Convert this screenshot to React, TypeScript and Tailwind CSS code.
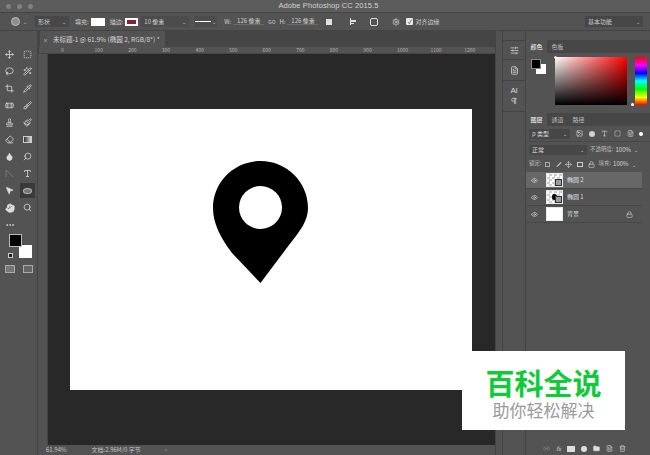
import React from "react";
import {
  Move, SquareDashed, Lasso, Wand2, Crop, Pipette, Bandage, Brush, Stamp, Paintbrush, Eraser, Droplet, Search, Type, MousePointer2, Hand, Settings, Eye, Lock, Trash2, Folder, Link2, Image, FileText, SlidersHorizontal, Pilcrow, Ellipsis,
} from "lucide-react";

const font = { fontFamily: '"Noto Sans CJK SC","Liberation Sans",sans-serif' };

function Tool({ children, active }: { children: React.ReactNode; active?: boolean }) {
  return <div className={`w-[15px] h-[15px] flex items-center justify-center text-[#dcdcdc] ${active ? "bg-[#3a3a3a]" : ""}`}>{children}</div>;
}

const rulerTop = ["0", "100", "200", "300", "400", "500", "600", "700", "800", "900", "1000", "1100", "1200"];

function LayerRow({ name, active, kind }: { name: string; active?: boolean; kind: "a" | "b" | "bg" }) {
  return (
    <div className={`h-[17px] flex items-center ${active ? "bg-[#676767]" : "bg-[#535353]"} border-b border-[#474747]`}>
      <Eye size={7} className="ml-[4px] w-[9px] text-[#d8d8d8]" />
      <div className={`relative ml-[7px] w-[17px] h-[14px] border border-[#e8e8e8] ${kind === "bg" ? "bg-white" : "bg-[repeating-conic-gradient(#cfcfcf_0_25%,#fff_0_50%)] bg-[length:5px_5px]"}`}>
        {kind === "b" && <div className="absolute left-[5px] top-[3px] w-[5px] h-[6px] rounded-full bg-black" />}
        {kind !== "bg" && <div className="absolute right-0 bottom-0 w-[7px] h-[7px] border border-[#333] bg-[#9a9a9a]" />}
      </div>
      <span className="ml-[4px] text-[6px] text-[#dedede] leading-none">{name}</span>
      {kind === "bg" && <Lock size={7} className="ml-auto mr-[9px] text-[#cfcfcf]" />}
    </div>
  );
}

export default function App() {
  return (
    <div className="relative w-[650px] h-[455px] overflow-hidden bg-[#535353] flex flex-col" style={font}>
      {/* title */}
      <div className="h-[13px] shrink-0 bg-[#5c5c5c] border-b border-[#444] flex items-center relative">
        <div className="flex gap-[6px] ml-[6px]">
          <div className="w-[5px] h-[5px] rounded-full bg-[#808080]" />
          <div className="w-[5px] h-[5px] rounded-full bg-[#808080]" />
          <div className="w-[5px] h-[5px] rounded-full bg-[#808080]" />
        </div>
        <div className="flex-1 text-center text-[7.5px] text-[#d4d4d4] leading-none tracking-[0.1px] mr-[26px]" style={{ fontFamily: '"Liberation Sans",sans-serif' }}>Adobe Photoshop CC 2015.5</div>
      </div>
      {/* options */}
      <div className="h-[18px] shrink-0 bg-[#535353] border-b border-[#444] flex items-center text-[6px] text-[#cfcfcf] leading-none">
        <div className="ml-[11px] w-[9px] h-[9px] rounded-full bg-[#8e8e8e] border border-[#bbb]" />
        <span className="ml-[3px] text-[5px]">⌄</span>
        <div className="ml-[8px] w-[34px] h-[11px] bg-[#484848] flex items-center justify-between px-[3px]"><span>形状</span><span className="text-[5px]">⌄</span></div>
        <span className="ml-[6px]">填充:</span>
        <div className="ml-[2px] w-[14px] h-[8px] bg-white" />
        <span className="ml-[5px]">描边:</span>
        <div className="ml-[2px] w-[13px] h-[8px] bg-white flex items-center justify-center"><div className="w-[9px] h-[4px] border-2 border-[#8a2030] bg-white" /></div>
        <div className="ml-[3px] w-[48px] h-[11px] flex items-center justify-between px-[3px] bg-[#4c4c4c]"><span>10 像素</span><span className="text-[5px]">⌄</span></div>
        <div className="ml-[5px] w-[23px] h-[11px] flex items-center gap-[1px] pl-[1px] bg-[#4c4c4c]"><div className="w-[16px] h-[1px] bg-white" /><span className="text-[5px]">⌄</span></div>
        <span className="ml-[7px]">W:</span>
        <span className="ml-[2px] w-[31px] text-center border-b border-[#6a6a6a]">126 像素</span>
        <span className="ml-[4px] text-[5px]">GO</span>
        <span className="ml-[4px]">H:</span>
        <span className="ml-[2px] w-[31px] text-center border-b border-[#6a6a6a]">126 像素</span>
        <div className="ml-[8px] w-[6px] h-[6px] bg-[#e0e0e0]" />
        <div className="ml-[18px] w-[7px] h-[7px] border-l border-[#e0e0e0] flex flex-col gap-[1px] justify-center"><div className="w-[5px] h-[2px] bg-[#e0e0e0]" /><div className="w-[3px] h-[1px] bg-[#e0e0e0]" /></div>
        <div className="ml-[13px] w-[8px] h-[8px] rounded-[2px] border border-[#e0e0e0]" />
        <Settings size={8} className="ml-[14px] text-[#e0e0e0]" />
        <div className="ml-[6px] w-[7px] h-[7px] bg-[#e8e8e8] rounded-[1px] flex items-center justify-center text-[#333] text-[6px]">✓</div>
        <span className="ml-[2px]">对齐边缘</span>
        <div className="ml-auto mr-[7px] w-[58px] h-[11px] bg-[#474747] flex items-center justify-between px-[3px]"><span>基本功能</span><span className="text-[5px]">⌄</span></div>
      </div>

      <div className="flex-1 flex min-h-0">
        {/* toolbar */}
        <div className="w-[38px] shrink-0 bg-[#535353] border-r border-[#444] pt-[16px] flex flex-col items-center">
          <div className="grid grid-cols-2 gap-x-[3px] gap-y-[2px] w-[33px]">
            <Tool><Move size={9} /></Tool>
            <Tool><SquareDashed size={9} /></Tool>
            <Tool><Lasso size={9} /></Tool>
            <Tool><Wand2 size={9} /></Tool>
            <Tool><Crop size={9} /></Tool>
            <Tool><Pipette size={9} /></Tool>
            <Tool><Bandage size={9} /></Tool>
            <Tool><Brush size={9} /></Tool>
            <Tool><Stamp size={9} /></Tool>
            <Tool><Paintbrush size={9} /></Tool>
            <Tool><Eraser size={9} /></Tool>
            <Tool><div className="w-[9px] h-[7px] bg-gradient-to-r from-[#333] to-[#ddd] border border-[#ccc]" /></Tool>
            <Tool><Droplet size={9} fill="#ddd" /></Tool>
            <Tool><Search size={9} className="-scale-x-100" /></Tool>
            <Tool><svg width="9" height="9" viewBox="0 0 9 9" fill="none" stroke="#777"><path d="M1 8V1l7 7" /></svg></Tool>
            <Tool><Type size={9} /></Tool>
            <Tool><MousePointer2 size={9} fill="#ddd" /></Tool>
            <Tool active><div className="w-[9px] h-[6px] rounded-[50%] border border-[#bbb] bg-[#777]" /></Tool>
            <Tool><Hand size={10} fill="#ddd" /></Tool>
            <Tool><Search size={9} /></Tool>
            <Tool><Ellipsis size={10} /></Tool>
          </div>
          <div className="relative w-[24px] h-[24px] mt-[2px] self-start ml-[8px]">
            <div className="absolute right-0 bottom-0 w-[13px] h-[13px] bg-white" />
            <div className="absolute left-[1px] top-0 w-[13px] h-[13px] bg-black border border-[#bbb]" />
            <div className="absolute left-0 bottom-0 w-[5px] h-[5px] bg-[#222] border border-[#ccc]" />
          </div>
          <div className="flex gap-[8px] mt-[7px]">
            <div className="w-[10px] h-[8px] border border-[#aaa] bg-[#777]" />
            <div className="w-[10px] h-[8px] border border-[#aaa] bg-[#666]" />
          </div>
        </div>

        {/* document */}
        <div className="flex-1 flex flex-col min-w-0">
          <div className="h-[16px] shrink-0 bg-[#454545] flex">
            <div className="w-[125px] bg-[#535353] flex items-center text-[6.5px] text-[#d4d4d4] leading-none whitespace-nowrap ml-[2px]">
              <span className="ml-[3px] mr-[5px] text-[5px]">×</span>未标题-1 @ 61.9% (椭圆 2, RGB/8*) *
            </div>
          </div>
          <div className="h-[7px] shrink-0 bg-[#535353] flex text-[5px] leading-none text-[#b4b4b4] border-b border-[#444]">
            <div className="w-[10px] border-r border-[#444]" />
            <div className="flex-1 flex pl-[22px]">
              {rulerTop.map((t) => (
                <span key={t} className="w-[33.6px] shrink-0">{t}</span>
              ))}
            </div>
          </div>
          <div className="flex-1 flex min-h-0">
            <div className="w-[10px] shrink-0 bg-[#535353] border-r border-[#444]" />
            <div className="flex-1 bg-[#282828] pl-[22px] pt-[55px]">
              <div className="w-[402px] h-[281px] bg-white flex justify-center pl-[-1px] pt-[52px]">
                <svg width="95" height="122" viewBox="0 0 95 122" className="mr-[22px]">
                  <path fillRule="evenodd" fill="#000" d="M47.5 0C21.3 0 0 21 0 47c0 16 8 30 19 45l28.500 30 28.500-38C87 70 95 60 95 47 95 21 73.700 0 47.500 0ZM47.500 25a21.500 21.500 0 1 1 0 43 21.500 21.500 0 0 1 0-43Z" />
                </svg>
              </div>
            </div>
          </div>
          <div className="h-[10px] shrink-0 bg-[#535353] flex items-center text-[6px] text-[#c4c4c4] leading-none">
            <span className="ml-[8px]">61.94%</span>
            <span className="ml-[25px]">文档:2.96M/0 字节</span>
            <span className="ml-[24px] text-[6px]">›</span>
          </div>
        </div>

        {/* gutter */}
        <div className="w-[8px] shrink-0 bg-[#535353] border-x border-[#444]" />

        {/* collapsed panels */}
        <div className="w-[23px] shrink-0 bg-[#535353] border-r border-[#444] pt-[9px] flex flex-col text-[#d8d8d8]">
          <div className="h-[20px] border-y border-[#444] flex items-center justify-center"><SlidersHorizontal size={9} /></div>
          <div className="h-[21px] border-b border-[#444] flex items-center justify-center"><FileText size={9} /></div>
          <div className="h-[31px] border-b border-[#444] flex flex-col items-center justify-center leading-none">
            <span className="text-[8px]" style={{ fontFamily: '"Liberation Sans",sans-serif' }}>Al</span>
            <Pilcrow size={8} className="mt-[2px]" />
          </div>
        </div>

        {/* right panels */}
        <div className="w-[124px] shrink-0 bg-[#535353] flex flex-col text-[6px] text-[#d8d8d8] leading-none">
          <div className="h-[9px] bg-[#535353]" />
          <div className="h-[13px] flex bg-[#474747] items-stretch">
            <div className="w-[21px] bg-[#535353] flex items-center justify-center text-white">颜色</div>
            <div className="w-[21px] flex items-center justify-center text-[#bdbdbd]">色板</div>
          </div>
          <div className="h-[58px] flex pt-[4px] pb-[1px] relative">
            <div className="relative w-[24px] h-[20px] ml-[5px] mt-[2px]">
              <div className="absolute left-[5px] top-[5px] w-[10px] h-[10px] bg-white" />
              <div className="absolute left-0 top-0 w-[10px] h-[10px] bg-black border border-[#888]" />
            </div>
            <div className="w-[72px] h-[48px] relative" style={{ background: "linear-gradient(to top,#000,transparent),linear-gradient(to right,#fff,#ff0000)" }}>
              <div className="absolute left-[-1px] top-[-1px] w-[3px] h-[3px] rounded-full border border-white" />
            </div>
            <div className="ml-[8px] w-[12px] h-[48px] relative" style={{ background: "linear-gradient(to bottom,#ff0000,#ff00ff 17%,#0000ff 34%,#00ffff 50%,#00ff00 67%,#ffff00 84%,#ff0000)" }}>
              <div className="absolute left-[-4px] bottom-[-1px] w-[3px] h-[3px] rounded-full bg-white" />
            </div>
          </div>
          <div className="h-[13px] flex bg-[#474747] items-stretch mt-[2px]">
            <div className="w-[21px] bg-[#535353] flex items-center justify-center text-white">图层</div>
            <div className="w-[21px] flex items-center justify-center text-[#bdbdbd]">通道</div>
            <div className="w-[21px] flex items-center justify-center text-[#bdbdbd]">路径</div>
          </div>
          <div className="h-[16px] flex items-center border-b border-[#484848]">
            <div className="ml-[3px] w-[41px] h-[10px] bg-[#474747] flex items-center justify-between px-[3px]"><span>ρ 类型</span><span className="text-[5px]">⌄</span></div>
            <Image size={7} className="ml-[6px]" />
            <div className="ml-[6px] w-[6px] h-[6px] rounded-full bg-[#cfcfcf]" />
            <Type size={7} className="ml-[6px]" />
            <SquareDashed size={7} className="ml-[6px]" />
            <FileText size={7} className="ml-[6px]" />
            <div className="ml-[5px] w-[4px] h-[4px] rounded-full bg-white" />
          </div>
          <div className="h-[15px] flex items-center">
            <div className="ml-[3px] w-[58px] h-[10px] bg-[#474747] flex items-center justify-between px-[3px]"><span>正常</span><span className="text-[5px]">⌄</span></div>
            <span className="ml-[3px] text-[#bdbdbd] text-[5.500px]">不透明度:</span>
            <span className="ml-[2px]">100%</span>
            <span className="ml-[3px] text-[5px]">⌄</span>
          </div>
          <div className="h-[14px] flex items-center">
            <span className="ml-[3px] text-[#bdbdbd] text-[5.500px]">锁定:</span>
            <div className="ml-[3px] w-[5px] h-[5px] border border-[#aaa]" />
            <div className="ml-[6px] w-[6px] h-[1px] bg-[#ccc] -rotate-45" />
            <Move size={7} className="ml-[3px]" />
            <div className="ml-[5px] w-[6px] h-[5px] border border-[#ccc]" />
            <Lock size={7} className="ml-[5px]" />
            <span className="ml-[4px] text-[#bdbdbd] text-[5.500px]">填充:</span>
            <span className="ml-[2px]">100%</span>
            <span className="ml-[3px] text-[5px]">⌄</span>
          </div>
          <div className="w-[116px] ml-0 flex flex-col mt-[1px]">
            <LayerRow name="椭圆 2" active kind="a" />
            <LayerRow name="椭圆 1" kind="b" />
            <LayerRow name="背景" kind="bg" />
          </div>
          <div className="flex-1" />
          <div className="h-[13px] flex items-center justify-end gap-[6px] pr-[24px] text-[#d4d4d4]">
            <Link2 size={7} className="text-[#8a8a8a]" />
            <span className="text-[6px] italic">fx</span>
            <div className="w-[8px] h-[6px] bg-[#ddd]" />
            <div className="w-[6px] h-[6px] rounded-full bg-[#ddd]" />
            <Folder size={7} fill="#ddd" />
            <FileText size={7} />
            <Trash2 size={7} />
          </div>
        </div>
      </div>

      {/* watermark */}
      <div className="absolute left-[462px] top-[351px] w-[163px] h-[79px] bg-white flex flex-col items-center">
        <div className="mt-[14px] text-[29px] leading-[34px] font-bold text-[#12c93c]" style={{ fontFamily: '"Noto Sans CJK SC",sans-serif' }}>百科全说</div>
        <div className="mt-[1px] text-[17px] leading-[20px] text-[#9a9a9a]" style={{ fontFamily: '"Noto Sans CJK SC",sans-serif' }}>助你轻松解决</div>
      </div>
    </div>
  );
}
